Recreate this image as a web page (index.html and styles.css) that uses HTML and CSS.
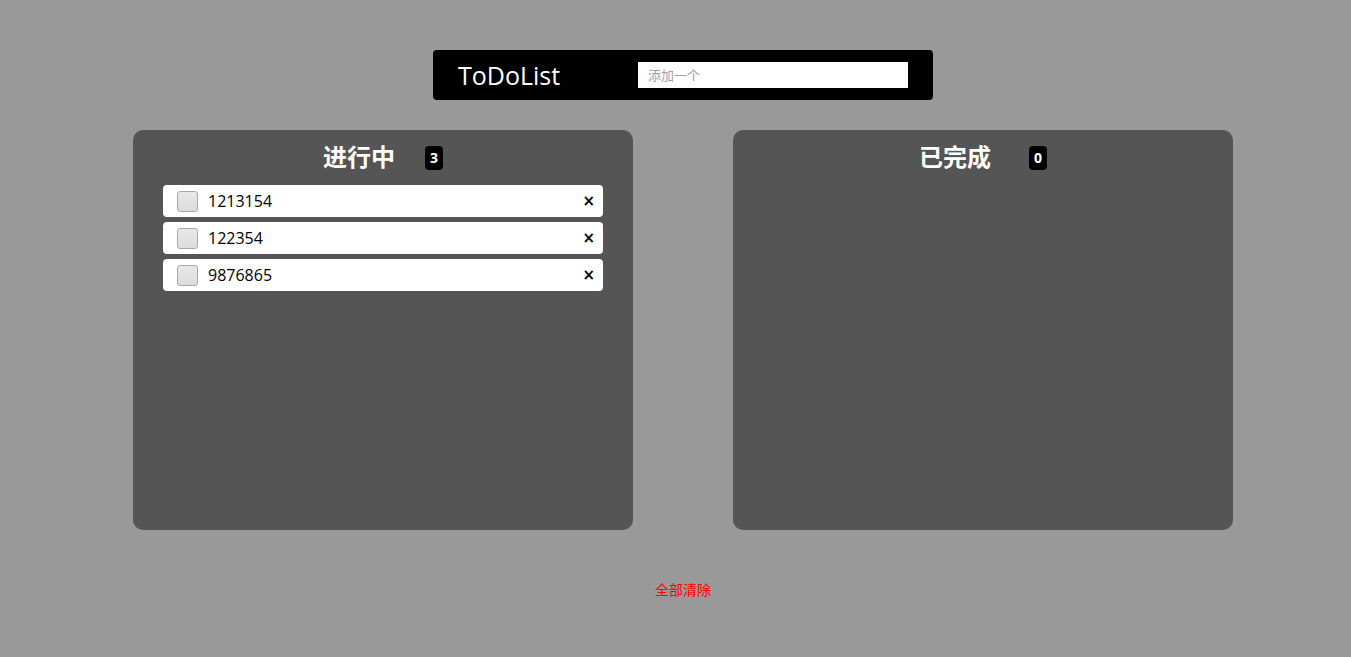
FILE: index.html
```html
<!DOCTYPE html>
<html lang="zh-CN">
<head>
<meta charset="utf-8">
<title>ToDoList</title>
<link rel="stylesheet" href="styles.css">
</head>
<body>
<div class="app">
  <header class="topbar">
    <span class="logo">ToDoList</span>
    <input class="add-input" type="text" placeholder="添加一个">
  </header>
  <main class="boards">
    <section class="board">
      <div class="board-head">
        <h2 class="board-title">进行中</h2>
        <span class="badge">3</span>
      </div>
      <ul class="todo-list">
        <li class="todo"><input class="check" type="checkbox"><span class="todo-text">1213154</span><button class="del">×</button></li>
        <li class="todo"><input class="check" type="checkbox"><span class="todo-text">122354</span><button class="del">×</button></li>
        <li class="todo"><input class="check" type="checkbox"><span class="todo-text">9876865</span><button class="del">×</button></li>
      </ul>
    </section>
    <section class="board">
      <div class="board-head">
        <h2 class="board-title">已完成</h2>
        <span class="badge badge-done">0</span>
      </div>
      <ul class="todo-list"></ul>
    </section>
  </main>
  <div class="footer">
    <button class="clear">全部清除</button>
  </div>
</div>
</body>
</html>
```
FILE: styles.css
```css
* { box-sizing: border-box; }
html, body {
  margin: 0;
  padding: 0;
  background: #999999;
  font-family: "Open Sans", "Noto Sans CJK SC", sans-serif;
  overflow: hidden;
}
.app {
  width: 1100px;
  margin: 0 0 0 133px;
  padding-top: 50px;
}
.topbar {
  width: 500px;
  height: 50px;
  margin: 0 auto;
  background: #000;
  border-radius: 4px;
  display: flex;
  align-items: center;
  justify-content: space-between;
  padding: 0 25px;
}
.logo {
  color: #fff;
  font-size: 25px;
  line-height: 30px;
}
.add-input {
  width: 270px;
  height: 26px;
  border: none;
  outline: none;
  padding: 0 10px;
  font-family: "Open Sans", "Noto Sans CJK SC", sans-serif;
  font-size: 13px;
  background: #fff;
}
.add-input::placeholder { color: #a0a0a0; }
.boards {
  display: flex;
  gap: 100px;
  margin-top: 30px;
}
.board {
  width: 500px;
  height: 400px;
  background: #555555;
  border-radius: 10px;
  padding-top: 8px;
}
.board-head {
  display: flex;
  justify-content: center;
  align-items: flex-start;
  gap: 30px;
  height: 40px;
}
.board-title {
  margin: 2px 0 0;
  color: #fff;
  font-size: 24px;
  font-weight: bold;
  line-height: 32px;
  font-family: "Noto Sans CJK SC", sans-serif;
}
.badge {
  display: inline-block;
  min-width: 18px;
  height: 24px;
  line-height: 24px;
  padding: 0 4px;
  background: #000;
  color: #fff;
  border-radius: 4px;
  font-size: 14px;
  font-weight: bold;
  text-align: center;
  margin-top: 8px;
}
.badge-done { margin-left: 8px; }
.todo-list {
  list-style: none;
  margin: 7px 0 0;
  padding: 0 30px;
}
.todo {
  height: 32px;
  background: #fff;
  border-radius: 4px;
  margin-bottom: 5px;
  display: flex;
  align-items: center;
  padding: 0 8px 0 14px;
}
.check {
  appearance: none;
  -webkit-appearance: none;
  width: 21px;
  height: 21px;
  margin: 0 10px 0 0;
  border: 1px solid #a8a8a8;
  border-radius: 3px;
  background: linear-gradient(#e8e8e8, #dcdcdc);
  flex: none;
}
.todo-text {
  flex: 1;
  font-size: 16px;
  color: #000;
}
.del {
  border: none;
  background: transparent;
  font-size: 15px;
  line-height: 20px;
  padding: 0;
  color: #000;
  font-family: "DejaVu Sans", sans-serif;
  font-weight: bold;
  cursor: pointer;
}
.footer {
  text-align: center;
  margin-top: 48px;
}
.clear {
  border: none;
  background: transparent;
  color: #ff0000;
  font-size: 14px;
  line-height: 20px;
  padding: 0;
  font-family: "Noto Sans CJK SC", sans-serif;
  cursor: pointer;
}
```
